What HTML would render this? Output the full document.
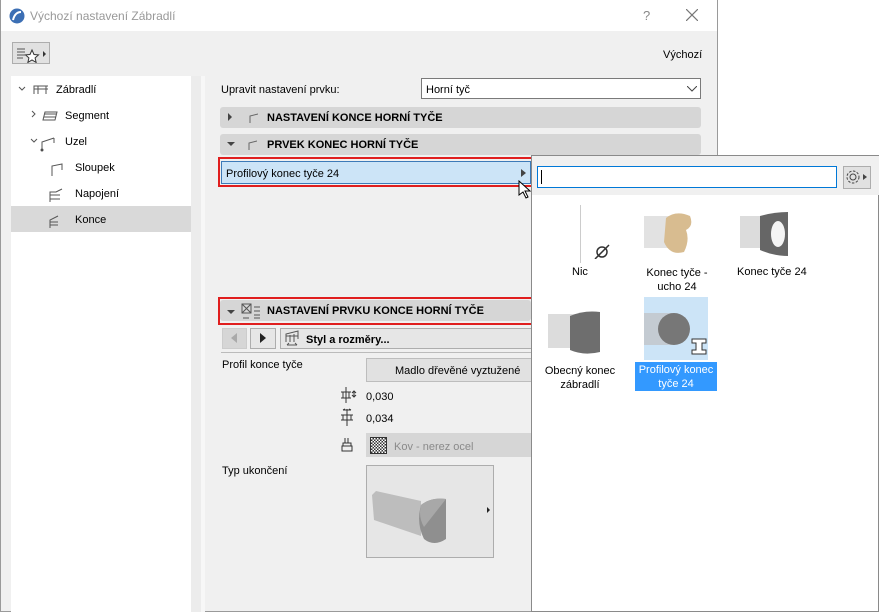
<!DOCTYPE html>
<html><head><meta charset="utf-8"><style>
*{box-sizing:border-box;margin:0;padding:0}
body{width:879px;height:612px;position:relative;overflow:hidden;background:#fff;font-family:"Liberation Sans","DejaVu Sans",sans-serif;font-size:11px;color:#000}
.a{position:absolute}
.hdr{position:absolute;left:220px;width:481px;height:21px;background:#d6d6d6;border-radius:3px;font-weight:bold;font-size:11px;line-height:22px}
.t{position:absolute;white-space:nowrap}
</style></head><body>
<div class="a" style="left:0;top:0;width:718px;height:612px;background:#f0f0f0;border:1px solid #9a9a9a;border-top:none"></div>
<div class="a" style="left:1px;top:0;width:716px;height:31px;background:#fff"></div>
<svg class="a" style="left:9px;top:8px" width="16" height="16"><circle cx="8" cy="8" r="7.5" fill="#3c6fb4"/><path d="M4 12 Q6 4 12 4" stroke="#fff" stroke-width="2" fill="none"/></svg>
<div class="t" style="left:30px;top:9px;font-size:12px;color:#999">Výchozí nastavení Zábradlí</div>
<div class="t" style="left:643px;top:8px;font-size:13px;color:#888">?</div>
<svg class="a" style="left:686px;top:9px" width="12" height="12"><path d="M0 0L12 12M12 0L0 12" stroke="#777" stroke-width="1.2"/></svg>
<div class="a" style="left:12px;top:42px;width:38px;height:22px;border:1px solid #adadad;background:#e1e1e1"></div>
<svg class="a" style="left:15px;top:45px" width="34" height="18"><path d="M2 4h8M2 7h8M2 10h8M2 13h6" stroke="#555" stroke-width="1"/><path d="M17 5l2 4.5 4.5.4-3.4 3 1 4.5-4.1-2.4-4.1 2.4 1-4.5-3.4-3 4.5-.4z" fill="#fff" stroke="#333"/><path d="M28 6l3 3-3 3z" fill="#333"/></svg>
<div class="t" style="left:663px;top:49px;font-size:11px">Výchozí</div>
<div class="a" style="left:11px;top:76px;width:180px;height:536px;background:#fff"></div>
<div class="a" style="left:11px;top:206px;width:180px;height:26px;background:#d9d9d9"></div>
<svg class="a" style="left:16px;top:80px" width="180" height="150" fill="none" stroke="#555">
<path d="M3 7l3 3 3-3"/><path d="M18 14v-8h14M22 14V6M30 14V6M18 9h14"/>
<path d="M16 31l3 3-3 3"/><path d="M27 40l2-8h12l-2 8zM28 37h12M28 34h12"/>
<path d="M15 59l3 3 3-3"/><path d="M26 70v-8l12-4M38 58v5" /><circle cx="26" cy="70" r="1" fill="#333"/>
<path d="M36 96v-10l10-2v6"/>
<path d="M34 122v-10h6l6-3M34 115h10M34 119h10"/>
<path d="M34 148v-8l8-4M34 142h8M34 145h8"/>
</svg>
<div class="t" style="left:56px;top:84px">Zábradlí</div>
<div class="t" style="left:65px;top:110px">Segment</div>
<div class="t" style="left:65px;top:136px">Uzel</div>
<div class="t" style="left:75px;top:162px">Sloupek</div>
<div class="t" style="left:75px;top:188px">Napojení</div>
<div class="t" style="left:75px;top:214px">Konce</div>
<div class="a" style="left:191px;top:76px;width:10px;height:536px;background:#ececec"></div>
<div class="a" style="left:201px;top:76px;width:4px;height:536px;background:#f7f7f7"></div>
<div class="t" style="left:221px;top:84px">Upravit nastavení prvku:</div>
<div class="a" style="left:421px;top:78px;width:280px;height:21px;background:#fff;border:1px solid #7a7a7a"></div>
<div class="t" style="left:426px;top:84px">Horní tyč</div>
<svg class="a" style="left:687px;top:86px" width="10" height="6"><path d="M0 0l5 5 5-5" stroke="#444" fill="none"/></svg>
<div class="hdr" style="top:107px"><svg class="a" style="left:8px;top:6px" width="30" height="10"><path d="M0 0l4 4-4 4z" fill="#444"/><path d="M22 10V3l8-2" stroke="#666" fill="none"/></svg><span style="position:absolute;left:47px">NASTAVENÍ KONCE HORNÍ TYČE</span></div>
<div class="hdr" style="top:134px"><svg class="a" style="left:7px;top:6px" width="30" height="10"><path d="M0 2h8l-4 4z" fill="#444"/><path d="M22 10V3l8-2" stroke="#666" fill="none"/></svg><span style="position:absolute;left:47px">PRVEK KONEC HORNÍ TYČE</span></div>
<div class="a" style="left:218px;top:157px;width:316px;height:30px;border:2px solid #e01e1e"></div>
<div class="a" style="left:221px;top:161px;width:310px;height:23px;background:#cce4f7;border:1px solid #3d7ab8"></div>
<div class="t" style="left:226px;top:168px">Profilový konec tyče 24</div>
<svg class="a" style="left:521px;top:169px" width="6" height="8"><path d="M0 0l5 4-5 4z" fill="#444"/></svg>
<svg class="a" style="left:518px;top:180px" width="14" height="20"><path d="M1 1v14l4-3 3 6 2-1-3-6h5z" fill="#fff" stroke="#000"/></svg>
<div class="hdr" style="top:300px;width:311px"><svg class="a" style="left:7px;top:2px" width="40" height="18"><path d="M0 8h8l-4 4z" fill="#444"/><rect x="15" y="2" width="9" height="9" fill="none" stroke="#555"/><path d="M15 2l9 9M24 2l-9 9M27 5h6M27 9h6M27 13h6M27 16h6M16 16h6" stroke="#555"/></svg><span style="position:absolute;left:47px">NASTAVENÍ PRVKU KONCE HORNÍ TYČE</span></div>
<div class="a" style="left:218px;top:297px;width:315px;height:28px;border:2px solid #e01e1e"></div>
<div class="a" style="left:222px;top:328px;width:25px;height:21px;background:#d6d6d6;border:1px solid #ccc"></div>
<svg class="a" style="left:231px;top:333px" width="8" height="10"><path d="M6 0L0 5l6 5z" fill="#aaa"/></svg>
<div class="a" style="left:250px;top:328px;width:26px;height:21px;background:#e6e6e6;border:1px solid #adadad"></div>
<svg class="a" style="left:260px;top:333px" width="8" height="10"><path d="M0 0l6 5-6 5z" fill="#222"/></svg>
<div class="a" style="left:280px;top:328px;width:252px;height:21px;background:#e6e6e6;border:1px solid #adadad"></div>
<svg class="a" style="left:284px;top:330px" width="18" height="17" fill="none" stroke="#555"><path d="M2 12V4l12-3v8M2 6h12M6 12V5M10 12V4M3 15h10M3 15l2-2M13 15l-2-2"/></svg>
<div class="t" style="left:306px;top:334px;font-weight:bold">Styl a rozměry...</div>
<div class="a" style="left:221px;top:352px;width:310px;height:1px;background:#bbb"></div>
<div class="t" style="left:222px;top:359px">Profil konce tyče</div>
<div class="a" style="left:366px;top:358px;width:166px;height:24px;background:#e1e1e1;border:1px solid #bdbdbd"></div>
<div class="t" style="left:395px;top:365px">Madlo dřevěné vyztužené</div>
<svg class="a" style="left:340px;top:387px" width="22" height="40" fill="none" stroke="#333"><path d="M1 5h10M6 0v16M1 11h10M3 5v6M9 5v6M14 4v6M12 6l2-2 2 2M12 8l2 2 2-2"/><path d="M1 28h12M7 22v17M1 33h12M3 28v5M11 28v5M3 23h8M3 23l2-1M11 23l-2-1"/></svg>
<div class="t" style="left:366px;top:391px">0,030</div>
<div class="t" style="left:366px;top:413px">0,034</div>
<svg class="a" style="left:341px;top:438px" width="12" height="14" fill="none" stroke="#333"><path d="M4 0v5M7 0v5M2 5h8v3H2zM1 8h10v5H1z"/></svg>
<div class="a" style="left:366px;top:433px;width:166px;height:24px;background:#d6d6d6"></div>
<div class="a" style="left:370px;top:437px;width:17px;height:17px;border:1px solid #333;background:repeating-conic-gradient(#333 0 25%,#fff 0 50%) 0 0/3px 3px"></div>
<div class="t" style="left:394px;top:441px;color:#8a8a8a">Kov - nerez ocel</div>
<div class="t" style="left:222px;top:465px">Typ ukončení</div>
<div class="a" style="left:366px;top:465px;width:128px;height:93px;background:#e6e6e6;border:1px solid #adadad"></div>
<svg class="a" style="left:366px;top:465px" width="128" height="93"><path d="M6 30l4-4 45 10v35L8 55z" fill="#bdbdbd"/><path d="M55 40q10-8 25-6v40q-12 8-22 0q-8-16-3-34z" fill="#8f8f8f"/><path d="M55 40q10-8 25-6l-22 28q-6-10-3-22z" fill="#a8a8a8"/><path d="M121 42l3 3-3 3z" fill="#222"/></svg>
<div class="a" style="left:531px;top:155px;width:348px;height:457px;background:#fff;border:1px solid #8a8a8a"></div>
<div class="a" style="left:532px;top:156px;width:347px;height:39px;background:#f0f0f0"></div>
<div class="a" style="left:537px;top:166px;width:300px;height:22px;background:#fff;border:1px solid #0078d7"></div>
<div class="a" style="left:541px;top:170px;width:1px;height:14px;background:#000"></div>
<div class="a" style="left:843px;top:166px;width:28px;height:23px;background:#e1e1e1;border:1px solid #adadad"></div>
<svg class="a" style="left:845px;top:169px" width="24" height="17"><circle cx="8" cy="8" r="3" fill="none" stroke="#444"/><circle cx="8" cy="8" r="6" fill="none" stroke="#444" stroke-dasharray="2.5 1.5"/><path d="M18 5l4 3-4 3z" fill="#444"/></svg>
<div class="a" style="left:580px;top:205px;width:1px;height:58px;background:#ccc"></div>
<svg class="a" style="left:594px;top:244px" width="16" height="15" fill="none" stroke="#333" stroke-width="1.5"><circle cx="8" cy="8" r="5"/><path d="M1 15L15 1"/></svg>
<div class="t" style="left:572px;top:266px">Nic</div>
<svg class="a" style="left:644px;top:210px" width="66" height="46"><path d="M0 6h30v32H0z" fill="#e2e2e2"/><path d="M22 8q10-8 24-2 4 10-4 14 4 10-2 22-14 4-20-10z" fill="#d8bc90"/></svg>
<div class="t" style="left:646px;top:266px;text-align:center;width:62px;line-height:14px">Konec tyče -<br>ucho 24</div>
<svg class="a" style="left:740px;top:210px" width="62" height="46"><path d="M0 6h28v32H0z" fill="#dcdcdc"/><path d="M20 6q14-4 28-4v44q-14 0-28-6z" fill="#666"/><ellipse cx="38" cy="24" rx="7" ry="13" fill="#f4f4f4"/></svg>
<div class="t" style="left:737px;top:266px">Konec tyče 24</div>
<svg class="a" style="left:548px;top:308px" width="60" height="52"><path d="M0 6h30v34H0z" fill="#dcdcdc"/><path d="M22 8q14-6 30-4v40q-16 4-30-2z" fill="#6e6e6e"/></svg>
<div class="t" style="left:543px;top:364px;text-align:center;width:74px;line-height:14px">Obecný konec<br>zábradlí</div>
<div class="a" style="left:644px;top:297px;width:64px;height:63px;background:#cce4f7"></div>
<svg class="a" style="left:644px;top:297px" width="64" height="63"><path d="M0 16h30v32H0z" fill="#c4cbd2"/><circle cx="30" cy="32" r="16" fill="#777"/><path d="M48 42h14v4h-4v7h4v4H48v-4h4v-7h-4z" fill="#fff" stroke="#333"/></svg>
<div class="a" style="left:635px;top:362px;width:82px;height:29px;background:#3399ff"></div>
<div class="t" style="left:635px;top:363px;width:82px;text-align:center;color:#fff;line-height:14px">Profilový konec<br>tyče 24</div>
</body></html>
